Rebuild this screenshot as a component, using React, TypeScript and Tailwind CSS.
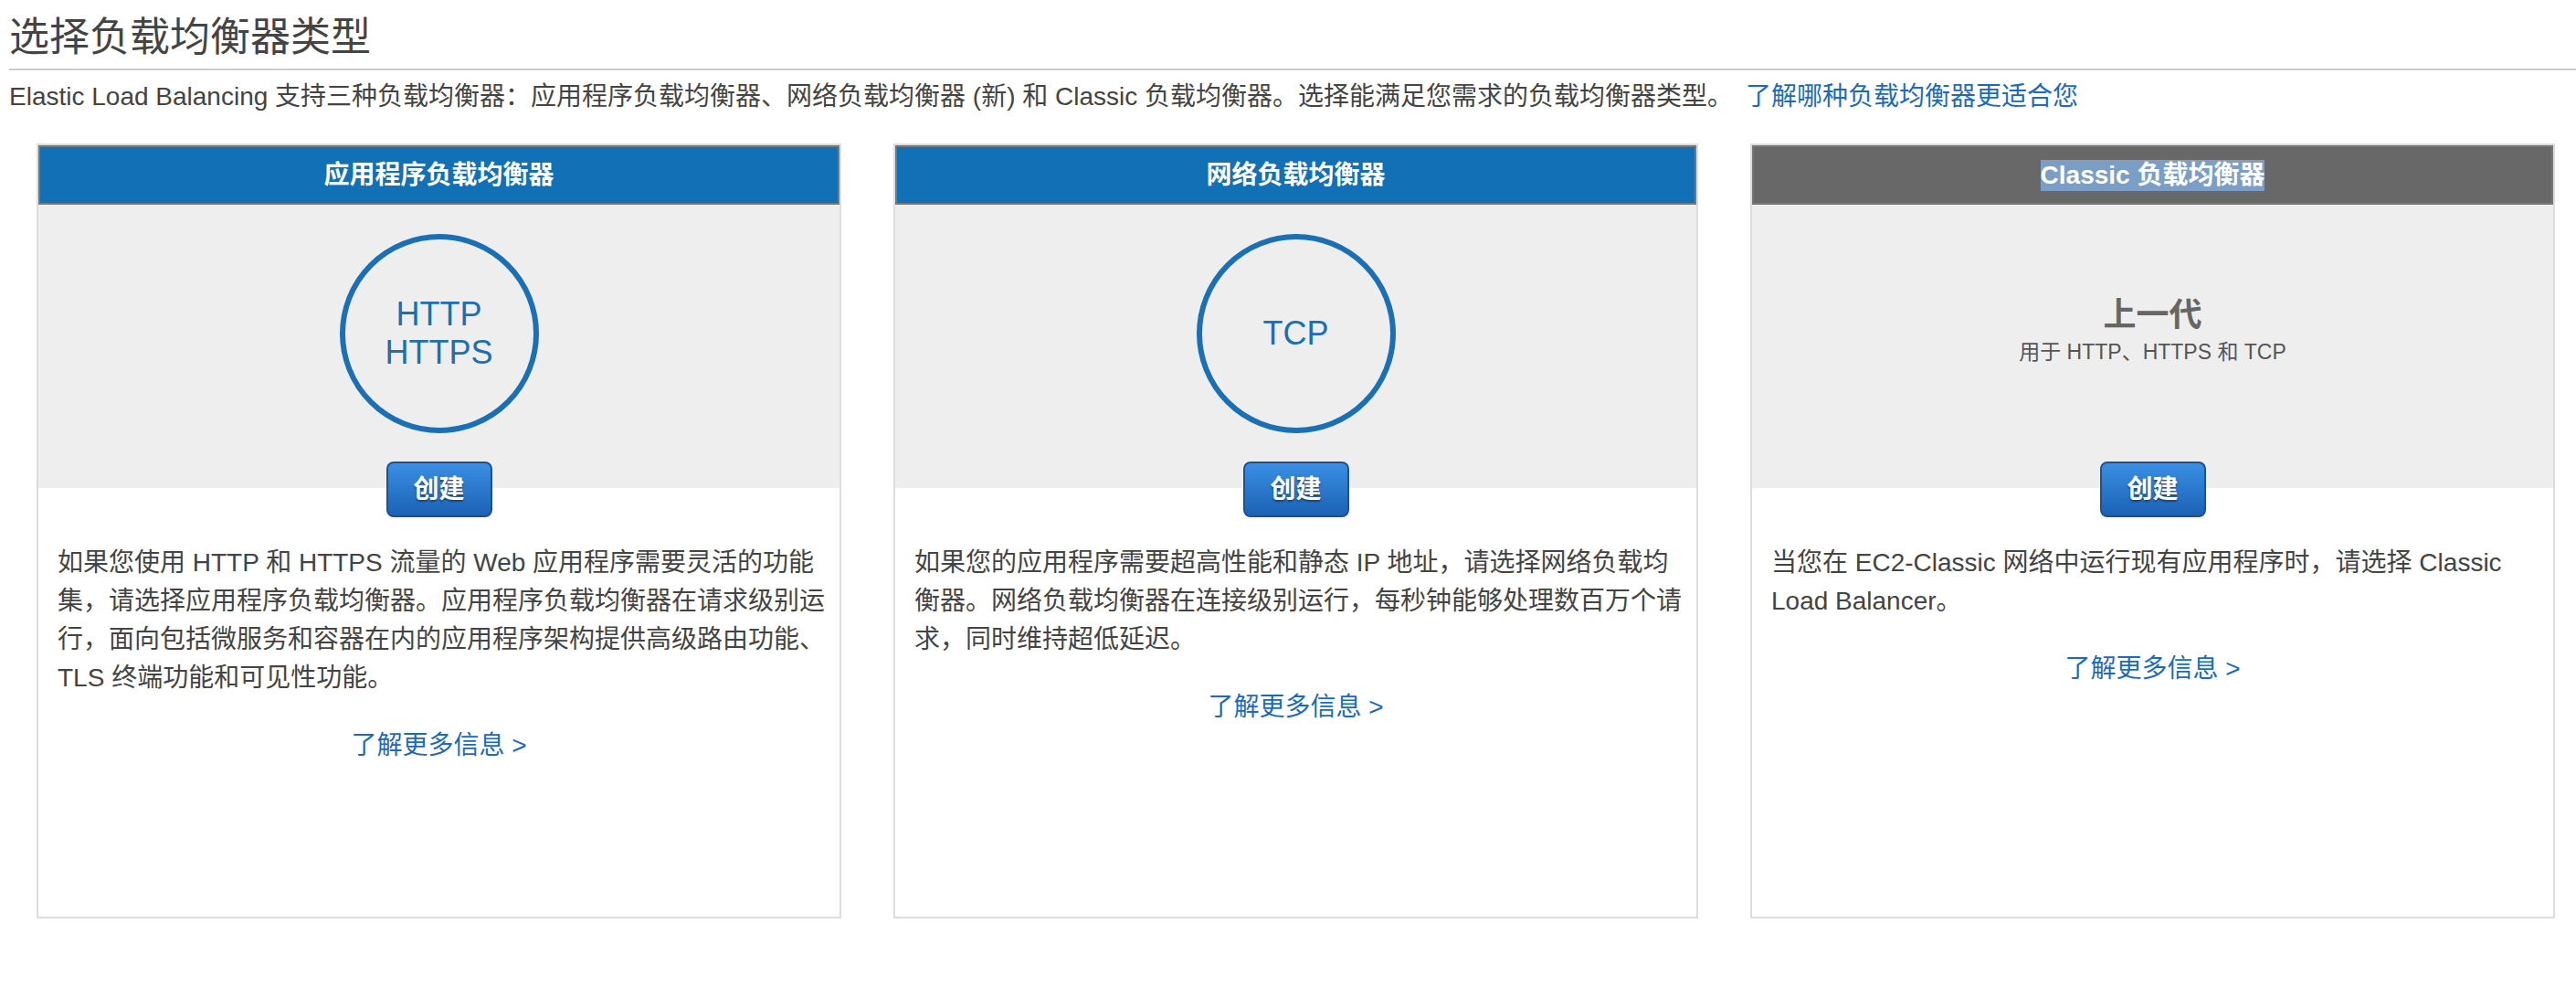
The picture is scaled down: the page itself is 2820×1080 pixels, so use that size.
import React from 'react';

interface LbCard {
  title: string;
  legacy?: boolean;
  protocols?: string[];
  body: string;
}

const cards: LbCard[] = [
  {
    title: '应用程序负载均衡器',
    protocols: ['HTTP', 'HTTPS'],
    body: '如果您使用 HTTP 和 HTTPS 流量的 Web 应用程序需要灵活的功能集，请选择应用程序负载均衡器。应用程序负载均衡器在请求级别运行，面向包括微服务和容器在内的应用程序架构提供高级路由功能、TLS 终端功能和可见性功能。',
  },
  {
    title: '网络负载均衡器',
    protocols: ['TCP'],
    body: '如果您的应用程序需要超高性能和静态 IP 地址，请选择网络负载均衡器。网络负载均衡器在连接级别运行，每秒钟能够处理数百万个请求，同时维持超低延迟。',
  },
  {
    title: 'Classic 负载均衡器',
    legacy: true,
    body: '当您在 EC2-Classic 网络中运行现有应用程序时，请选择 Classic Load Balancer。',
  },
];

const Card = ({ card }: { card: LbCard }) => (
  <div className="w-[881px] h-[848px] border-2 border-[#dddddd] bg-white flex flex-col">
    <div
      className={`h-[65px] flex items-center justify-center border-2 border-[#777777] text-white font-bold text-[28px] ${card.legacy ? 'bg-[#686868]' : 'bg-[#1270b6]'}`}
    >
      {card.legacy ? <span className="bg-[#7a9ec6] leading-[34px]">{card.title}</span> : card.title}
    </div>

    <div className="bg-[#eeeeee] pt-[32px] pb-[60px] flex justify-center">
      {card.legacy ? (
        <div className="h-[218px] flex flex-col items-center justify-center pb-[8px]">
          <div className="text-[36px] leading-[44px] font-bold text-[#666666]">上一代</div>
          <div className="text-[23px] leading-[28px] text-[#555555] mt-[4px]">用于 HTTP、HTTPS 和 TCP</div>
        </div>
      ) : (
        <div className="w-[218px] h-[218px] rounded-full border-[6px] border-[#1a6fb5] flex flex-col items-center justify-center text-[#1a6fb5] text-[36px] leading-[42px]">
          {card.protocols?.map((p) => (
            <span key={p}>{p}</span>
          ))}
        </div>
      )}
    </div>

    <div className="flex justify-center -mt-[29px]">
      <button className="w-[116px] h-[61px] rounded-[8px] border-2 border-[#1d528f] bg-gradient-to-b from-[#3a8fe4] to-[#1b62b5] text-white font-bold text-[28px] [text-shadow:0_2px_2px_rgba(0,0,0,0.4)]">
        创建
      </button>
    </div>

    <p className="pl-[21px] pr-[10px] mt-[29px] text-[28px] leading-[42px] text-[#444444]">{card.body}</p>

    <a className="mt-[32px] text-center text-[28px] leading-[42px] text-[#1a6bbf]">了解更多信息 &gt;</a>
  </div>
);

export default function App() {
  return (
    <div className="w-[2820px] h-[1080px] bg-white font-['Liberation_Sans','Noto_Sans_CJK_SC',sans-serif]">
      <div className="pl-[10px]">
        <h1 className="pt-[14px] pb-[8px] text-[44px] leading-[53px] text-[#444444] border-b-2 border-[#cccccc]">
          选择负载均衡器类型
        </h1>
        <p className="mt-[8px] text-[28px] leading-[42px] text-[#444444]">
          Elastic Load Balancing 支持三种负载均衡器：应用程序负载均衡器、网络负载均衡器 (新) 和 Classic 负载均衡器。选择能满足您需求的负载均衡器类型。
          <a className="ml-[14px] text-[#1a6bbf]">了解哪种负载均衡器更适合您</a>
        </p>
      </div>

      <div className="flex gap-[57px] pl-[40px] mt-[30px]">
        {cards.map((c) => (
          <Card key={c.title} card={c} />
        ))}
      </div>
    </div>
  );
}
